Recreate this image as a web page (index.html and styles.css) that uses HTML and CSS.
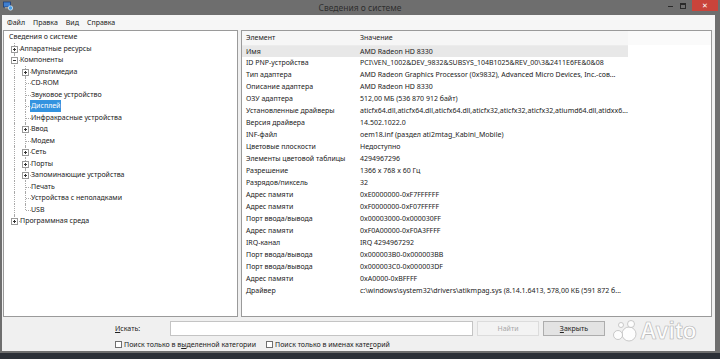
FILE: index.html
```html
<!DOCTYPE html>
<html lang="ru">
<head>
    <meta charset="UTF-8">
    <meta name="viewport" content="width=device-width, initial-scale=1.0">
    <title>Сведения о системе</title>
    <link rel="stylesheet" href="styles.css">
</head>
<body>
    <div class="window">
        <div class="titlebar">
            <svg class="app-icon" width="10" height="10" viewBox="0 0 10 10">
                <rect x="0.5" y="1" width="7" height="5" fill="#3f7fd0" stroke="#1d3f78" stroke-width="0.8"/>
                <rect x="2" y="6" width="4" height="1.5" fill="#999"/>
                <circle cx="7.5" cy="7" r="2.2" fill="#4aa0e8" stroke="#fff" stroke-width="0.6"/>
            </svg>
            <div class="title">Сведения о системе</div>
            <div class="caption">
                <span class="cap-btn cap-min"></span>
                <span class="cap-btn cap-max"></span>
                <span class="cap-btn cap-close">✕</span>
            </div>
        </div>
        <div class="client">
            <div class="menubar">
                <span class="menu-item">Файл</span>
                <span class="menu-item">Правка</span>
                <span class="menu-item">Вид</span>
                <span class="menu-item">Справка</span>
            </div>
            <div class="panes">
                <div class="tree">
                    <div class="node">Сведения о системе</div>
                    <div class="node"><i class="ln tee"><b class="box plus"></b></i>Аппаратные ресурсы</div>
                    <div class="node"><i class="ln tee"><b class="box minus"></b></i>Компоненты</div>
                    <div class="node"><i class="ln v"></i><i class="ln tee"><b class="box plus"></b></i>Мультимедиа</div>
                    <div class="node"><i class="ln v"></i><i class="ln tee"></i>CD-ROM</div>
                    <div class="node"><i class="ln v"></i><i class="ln tee"></i>Звуковое устройство</div>
                    <div class="node"><i class="ln v"></i><i class="ln tee"></i><span class="selected">Дисплей</span></div>
                    <div class="node"><i class="ln v"></i><i class="ln tee"></i>Инфракрасные устройства</div>
                    <div class="node"><i class="ln v"></i><i class="ln tee"><b class="box plus"></b></i>Ввод</div>
                    <div class="node"><i class="ln v"></i><i class="ln tee"></i>Модем</div>
                    <div class="node"><i class="ln v"></i><i class="ln tee"><b class="box plus"></b></i>Сеть</div>
                    <div class="node"><i class="ln v"></i><i class="ln tee"><b class="box plus"></b></i>Порты</div>
                    <div class="node"><i class="ln v"></i><i class="ln tee"><b class="box plus"></b></i>Запоминающие устройства</div>
                    <div class="node"><i class="ln v"></i><i class="ln tee"></i>Печать</div>
                    <div class="node"><i class="ln v"></i><i class="ln tee"></i>Устройства с неполадками</div>
                    <div class="node"><i class="ln v"></i><i class="ln last"></i>USB</div>
                    <div class="node"><i class="ln last"><b class="box plus"></b></i>Программная среда</div>
                </div>
                <div class="details">
                    <table class="props">
                        <thead>
                            <tr><th class="col-name">Элемент</th><th class="col-value">Значение</th></tr>
                        </thead>
                        <tbody>
                            <tr class="hot"><td>Имя</td><td>AMD Radeon HD 8330</td></tr>
                            <tr><td>ID PNP-устройства</td><td>PCI\VEN_1002&amp;DEV_9832&amp;SUBSYS_104B1025&amp;REV_00\3&amp;2411E6FE&amp;0&amp;08</td></tr>
                            <tr><td>Тип адаптера</td><td>AMD Radeon Graphics Processor (0x9832), Advanced Micro Devices, Inc.-сов...</td></tr>
                            <tr><td>Описание адаптера</td><td>AMD Radeon HD 8330</td></tr>
                            <tr><td>ОЗУ адаптера</td><td>512,00 МБ (536 870 912 байт)</td></tr>
                            <tr><td>Установленные драйверы</td><td>aticfx64.dll,aticfx64.dll,aticfx64.dll,aticfx32,aticfx32,aticfx32,atiumd64.dll,atidxx6...</td></tr>
                            <tr><td>Версия драйвера</td><td>14.502.1022.0</td></tr>
                            <tr><td>INF-файл</td><td>oem18.inf (раздел ati2mtag_Kabini_Mobile)</td></tr>
                            <tr><td>Цветовые плоскости</td><td>Недоступно</td></tr>
                            <tr><td>Элементы цветовой таблицы</td><td>4294967296</td></tr>
                            <tr><td>Разрешение</td><td>1366 x 768 x 60 Гц</td></tr>
                            <tr><td>Разрядов/пиксель</td><td>32</td></tr>
                            <tr><td>Адрес памяти</td><td>0xE0000000-0xF7FFFFFF</td></tr>
                            <tr><td>Адрес памяти</td><td>0xF0000000-0xF07FFFFF</td></tr>
                            <tr><td>Порт ввода/вывода</td><td>0x00003000-0x000030FF</td></tr>
                            <tr><td>Адрес памяти</td><td>0xF0A00000-0xF0A3FFFF</td></tr>
                            <tr><td>IRQ-канал</td><td>IRQ 4294967292</td></tr>
                            <tr><td>Порт ввода/вывода</td><td>0x000003B0-0x000003BB</td></tr>
                            <tr><td>Порт ввода/вывода</td><td>0x000003C0-0x000003DF</td></tr>
                            <tr><td>Адрес памяти</td><td>0xA0000-0xBFFFF</td></tr>
                            <tr><td>Драйвер</td><td>c:\windows\system32\drivers\atikmpag.sys (8.14.1.6413, 578,00 КБ (591 872 б...</td></tr>
                        </tbody>
                    </table>
                </div>
            </div>
            <div class="searchbar">
                <div class="search-row">
                    <label class="search-label" for="find"><u>И</u>скать:</label>
                    <input class="search-input" id="find" type="text">
                    <button class="btn btn-disabled">Найти</button>
                    <button class="btn"><u>З</u>акрыть</button>
                </div>
                <div class="check-row">
                    <label class="check"><span class="check-box"></span>Поиск только в в<u>ы</u>деленной категории</label>
                    <label class="check"><span class="check-box"></span>Поиск только в именах кате<u>г</u>орий</label>
                </div>
            </div>
        </div>
    </div>
    <div class="avito">
        <svg class="avito-dots" width="26" height="22" viewBox="0 0 26 22">
            <circle cx="17" cy="14" r="7" />
            <circle cx="6" cy="15" r="4.5" />
            <circle cx="19" cy="4" r="3.5" />
            <circle cx="9" cy="5" r="2.5" />
        </svg>
        <span class="avito-text">Avito</span>
    </div>
</body>
</html>
```

FILE: styles.css
```css
body {
    margin: 0;
    padding: 0;
    width: 720px;
    height: 359px;
    overflow: hidden;
    background-color: #2c3037;
    font-family: "Noto Sans", "Open Sans", sans-serif;
    font-size: 7px;
    color: #222;
    position: relative;
}
.window {
    width: 720px;
    height: 353px;
    background-color: #6e6e6e;
    display: flex;
    flex-direction: column;
}
.titlebar {
    height: 16px;
    display: flex;
    align-items: center;
    position: relative;
}
.app-icon {
    margin-left: 3px;
    margin-top: -3px;
}
.title {
    position: absolute;
    left: 0;
    right: 0;
    top: 2px;
    text-align: center;
    font-size: 8.5px;
    color: #2e2e2e;
}
.caption {
    position: absolute;
    right: 2px;
    top: 0;
    display: flex;
    align-items: flex-start;
}
.cap-btn {
    display: block;
    width: 13px;
    height: 11px;
    position: relative;
}
.cap-min::after {
    content: "";
    position: absolute;
    left: 4px;
    top: 6px;
    width: 5px;
    height: 1px;
    background: #2a2a2a;
}
.cap-max::after {
    content: "";
    position: absolute;
    left: 3px;
    top: 3px;
    border: 1px solid #2a2a2a;
    border-top-width: 2px;
    box-sizing: border-box;
    width: 6px;
    height: 6px;
}
.cap-close {
    width: 26px;
    background-color: #c9443b;
    color: #fff;
    font-size: 7px;
    line-height: 11px;
    text-align: center;
    margin-left: 2px;
}
.client {
    flex: 1;
    margin: 0 5px 2px 2px;
    background-color: #f0f0f0;
    display: flex;
    flex-direction: column;
}
.menubar {
    height: 15px;
    background-color: #f6f6f6;
    display: flex;
    align-items: center;
    padding-left: 5px;
    gap: 8px;
}
.panes {
    height: 287px;
    display: flex;
    gap: 3px;
    padding: 0 3px 0 1px;
}
.tree {
    width: 235px;
    box-sizing: border-box;
    background: #fff;
    border: 1px solid #9a9a9a;
    padding-left: 5px;
}
.node {
    height: 11.5px;
    line-height: 11.5px;
    display: flex;
    white-space: nowrap;
}
.ln {
    display: block;
    width: 11px;
    height: 11.5px;
    flex: none;
    position: relative;
}
.ln.v::before,
.ln.tee::before {
    content: "";
    position: absolute;
    left: 5px;
    top: 0;
    bottom: 0;
    border-left: 1px dotted #a8a8a8;
}
.ln.last::before {
    content: "";
    position: absolute;
    left: 5px;
    top: 0;
    height: 6px;
    border-left: 1px dotted #a8a8a8;
}
.ln.tee::after,
.ln.last::after {
    content: "";
    position: absolute;
    left: 6px;
    right: 0;
    top: 6px;
    border-top: 1px dotted #a8a8a8;
}
.box {
    position: absolute;
    left: 2px;
    top: 3px;
    width: 7px;
    height: 7px;
    box-sizing: border-box;
    border: 1px solid #999;
    background: #fff;
    z-index: 1;
}
.box::before {
    content: "";
    position: absolute;
    left: 1px;
    top: 2px;
    width: 3px;
    height: 1px;
    background: #333;
}
.box.plus::after {
    content: "";
    position: absolute;
    left: 2px;
    top: 1px;
    width: 1px;
    height: 3px;
    background: #333;
}
.selected {
    background-color: #3393df;
    color: #fff;
    padding: 0 1px;
    margin-left: -1px;
}
.details {
    flex: 1;
    background: #fff;
    border: 1px solid #9a9a9a;
    overflow: hidden;
    background-image: linear-gradient(#fafafa, #fafafa);
    background-size: 100% 14px;
    background-repeat: no-repeat;
}
.props {
    border-collapse: collapse;
    table-layout: fixed;
    width: 386px;
}
.props th {
    height: 14px;
    padding: 0 0 0 4px;
    font-weight: normal;
    text-align: left;
    background-color: #f6f6f6;
    border-bottom: 1px solid #ececec;
    box-sizing: border-box;
}
.col-name {
    width: 114px;
}
.props td {
    height: 11.95px;
    line-height: 11.95px;
    padding: 0 0 0 4px;
    white-space: nowrap;
    overflow: hidden;
    text-overflow: ellipsis;
}
.props tr.hot td {
    background-color: #e8e8e8;
}
.searchbar {
    flex: 1;
    padding: 4px 0 0 113px;
}
.search-row {
    display: flex;
    align-items: center;
    height: 15px;
}
.search-label {
    width: 55px;
}
.search-input {
    width: 303px;
    height: 15px;
    box-sizing: border-box;
    border: 1px solid #c4c4c4;
    margin: 0;
    padding: 0;
    background: #fff;
}
.btn {
    height: 15px;
    width: 62px;
    margin-left: 4px;
    padding: 0;
    box-sizing: border-box;
    font-family: inherit;
    font-size: 7px;
    color: #222;
    background-color: #e3e3e3;
    border: 1px solid #adadad;
}
.btn-disabled {
    color: #a8a8a8;
    background-color: #f3f3f3;
    border-color: #dcdcdc;
}
.check-row {
    display: flex;
    gap: 10px;
    margin-top: 1px;
    height: 14px;
    align-items: center;
}
.check {
    display: flex;
    align-items: center;
}
.check-box {
    width: 7px;
    height: 7px;
    box-sizing: border-box;
    border: 1px solid #6f6f6f;
    background: #fff;
    margin-right: 2px;
}
.avito {
    position: absolute;
    left: 612px;
    top: 320px;
    display: flex;
    align-items: center;
}
.avito-dots circle {
    fill: #fdfdfd;
    stroke: #b4b4b4;
    stroke-width: 0.7;
}
.avito-text {
    font-family: "Liberation Sans", sans-serif;
    font-size: 23px;
    font-weight: bold;
    color: #fdfdfd;
    margin-left: 2px;
    -webkit-text-stroke: 0.6px #b0b0b0;
    line-height: 22px;
}
```
